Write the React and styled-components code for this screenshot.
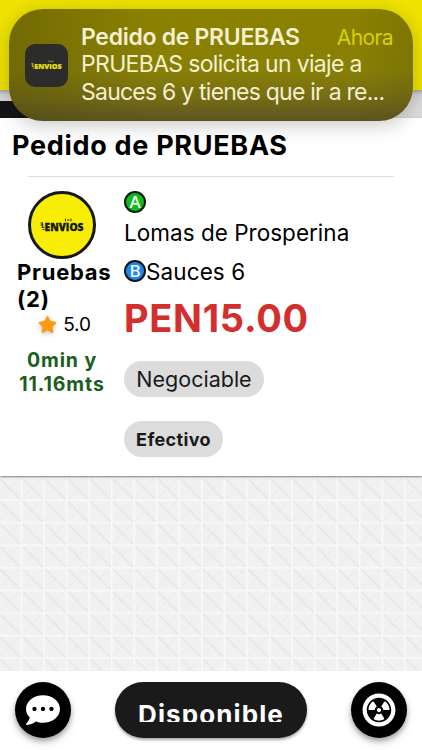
import React from "react";
import styled, { createGlobalStyle } from "styled-components";
import { FaCommentDots, FaRadiationAlt, FaStar } from "react-icons/fa";

const EnviosMark = ({ color, size }) => (
  <svg width={size} height={size * 0.32} viewBox="0 0 44 14">
    <g fill="none" stroke={color} strokeWidth="0.9">
      <path d="M0.5 5h2.5M0.5 7h3M1.5 9.3h3M2.5 11.5h2M2.5 4.5v5" />
      <path d="M25.5 0.6v2.6M31 0.6v2.6M27 2h2.6" />
    </g>
    <text
      x="4.5"
      y="13"
      fill={color}
      stroke={color}
      strokeWidth="0.3"
      fontFamily="Open Sans, sans-serif"
      fontSize="11"
      fontWeight="800"
      textLength="39"
      lengthAdjust="spacingAndGlyphs"
    >
      ENVIOS
    </text>
  </svg>
);

const App = () => {
  return (
    <>
      <GlobalStyle />
      <Screen>
        <Header />
        <Progress />
        <Order>
          <Title>Pedido de PRUEBAS</Title>
          <Divider />
          <Details>
            <Client>
              <Avatar>
                <EnviosMark color="#16160c" size={44} />
              </Avatar>
              <ClientName>Pruebas (2)</ClientName>
              <Rating>
                <FaStar />
                <span>5.0</span>
              </Rating>
              <Distance>
                0min y
                <br />
                11.16mts
              </Distance>
            </Client>
            <Trip>
              <Pin $color="#0fbc1c">A</Pin>
              <Origin>Lomas de Prosperina</Origin>
              <Destination>
                <Pin $color="#1f86f5">B</Pin>
                <span>Sauces 6</span>
              </Destination>
              <Price>PEN15.00</Price>
              <Chip $width={140}>Negociable</Chip>
              <Chip $width={99} $strong>
                Efectivo
              </Chip>
            </Trip>
          </Details>
        </Order>
        <Pattern>
          <svg width="100%" height="100%">
            <defs>
              <pattern
                id="tile"
                width="22.55"
                height="22.55"
                x="-1.8"
                y="1"
                patternUnits="userSpaceOnUse"
              >
                <path d="M0 22.55L22.55 0" stroke="#ececec" strokeWidth="1" />
                <path d="M0 0L22.55 22.55" stroke="#e5e5e5" strokeWidth="1.5" />
                <path d="M0 0.7H22.55M0.7 0V22.55" stroke="#fafafa" strokeWidth="1.4" />
              </pattern>
            </defs>
            <rect width="100%" height="100%" fill="url(#tile)" />
          </svg>
        </Pattern>
        <Footer>
          <RoundButton $icon={34}>
            <FaCommentDots />
          </RoundButton>
          <StatusButton>
            <StatusText>Disponible</StatusText>
          </StatusButton>
          <RoundButton $icon={34}>
            <FaRadiationAlt />
          </RoundButton>
        </Footer>
        <Notification>
          <AppIcon>
            <EnviosMark color="#e9df10" size={31} />
          </AppIcon>
          <Message>
            <MessageTop>
              <strong>Pedido de PRUEBAS</strong>
              <time>Ahora</time>
            </MessageTop>
            <MessageLine $spacing={-0.67}>PRUEBAS solicita un viaje a</MessageLine>
            <MessageLine $spacing={-0.77}>Sauces 6 y tienes que ir a re...</MessageLine>
          </Message>
        </Notification>
      </Screen>
    </>
  );
};

export default App;

const GlobalStyle = createGlobalStyle`
  * {
    box-sizing: border-box;
  }
  body {
    margin: 0;
    overflow: hidden;
    font-family: Inter, "Liberation Sans", sans-serif;
    background: #fff;
  }
`;

const Screen = styled.div`
  position: relative;
  display: flex;
  flex-direction: column;
  width: 422px;
  height: 750px;
  overflow: hidden;
`;

const Header = styled.header`
  flex: none;
  height: 90px;
  background: #eee300;
`;

const Progress = styled.div`
  flex: none;
  height: 28px;
  background: linear-gradient(#a9a9ac 0, #d5d5d8 5px, #dadadd 11px, transparent 11px),
    linear-gradient(90deg, #151516 50%, #dcdcdd 50%);
`;

const Order = styled.section`
  position: relative;
  flex: none;
  height: 358px;
  padding-top: 12px;
  background: #fff;
  box-shadow: 0 1px 2px rgb(0 0 0 / 50%);
`;

const Title = styled.h1`
  margin: 0 0 0 12px;
  font-size: 27px;
  line-height: 32px;
  font-weight: 700;
  letter-spacing: 0.7px;
  white-space: nowrap;
`;

const Divider = styled.div`
  height: 1px;
  margin: 14px 28px 0;
  background: #dedede;
`;

const Details = styled.div`
  display: flex;
  padding-top: 14px;
`;

const Client = styled.div`
  width: 124px;
  display: flex;
  flex-direction: column;
  align-items: center;
`;

const Avatar = styled.div`
  display: flex;
  align-items: center;
  justify-content: center;
  width: 68px;
  height: 68px;
  border: 3.5px solid #171717;
  border-radius: 50%;
  background: #f8ed05;
`;

const ClientName = styled.div`
  align-self: stretch;
  padding: 0 8px 0 17px;
  font-size: 22px;
  line-height: 27px;
  font-weight: 700;
  letter-spacing: 0.75px;
`;

const Rating = styled.div`
  display: flex;
  align-items: center;
  gap: 6px;
  height: 23px;
  padding-left: 5px;
  font-size: 19px;
  letter-spacing: -0.2px;
  svg {
    color: #ff990b;
    filter: drop-shadow(0 2px 2px rgb(0 0 0 / 20%));
  }
`;

const Distance = styled.div`
  margin-top: 12px;
  font-size: 19.5px;
  line-height: 24px;
  font-weight: 700;
  letter-spacing: 0.9px;
  text-align: center;
  color: #1b5e20;
`;

const Trip = styled.div`
  display: flex;
  flex-direction: column;
  align-items: flex-start;
`;

const Pin = styled.span`
  display: inline-flex;
  align-items: center;
  justify-content: center;
  width: 22px;
  height: 22px;
  border: 2px solid #0c1710;
  border-radius: 50%;
  font: 500 17px/18px "Noto Sans", sans-serif;
  color: #fff;
  background: ${(props) => props.$color};
`;

const Origin = styled.div`
  margin-top: 5px;
  font-size: 22.5px;
  line-height: 30px;
  letter-spacing: 0.02px;
`;

const Destination = styled.div`
  display: flex;
  align-items: center;
  height: 30px;
  margin-top: 8px;
  font-size: 22.5px;
  letter-spacing: 0.1px;
`;

const Price = styled.div`
  margin-top: 8px;
  font-size: 38px;
  line-height: 48px;
  font-weight: 700;
  letter-spacing: 0.7px;
  color: #d32f2f;
`;

const Chip = styled.div`
  display: flex;
  align-items: center;
  justify-content: center;
  width: ${(props) => props.$width}px;
  height: 36px;
  margin-top: ${(props) => (props.$strong ? 24 : 19)}px;
  border-radius: 18px;
  font-size: ${(props) => (props.$strong ? 18 : 21.5)}px;
  font-weight: ${(props) => (props.$strong ? 700 : 400)};
  letter-spacing: ${(props) => (props.$strong ? 0.35 : 0)}px;
  color: #1a1a1a;
  background: #dcdcdc;
`;

const Pattern = styled.div`
  flex: 1;
  background: #f1f1f1;
  svg {
    display: block;
  }
`;

const Footer = styled.footer`
  display: flex;
  justify-content: space-between;
  flex: none;
  height: 79px;
  padding: 11px 15px 0;
  background: #fff;
`;

const RoundButton = styled.button`
  display: flex;
  align-items: center;
  justify-content: center;
  width: 56px;
  height: 56px;
  padding: 0;
  border: none;
  border-radius: 50%;
  font-size: ${(props) => props.$icon}px;
  color: #fff;
  background: #000;
  box-shadow: 0 3px 5px rgb(0 0 0 / 30%), 0 5px 10px rgb(0 0 0 / 12%);
`;

const StatusButton = styled.button`
  display: flex;
  justify-content: center;
  width: 192px;
  height: 56px;
  padding: 17px 0 0;
  border: none;
  border-radius: 28px;
  background: #1a1a1a;
  box-shadow: 0 2px 3px rgb(0 0 0 / 35%);
`;

const StatusText = styled.span`
  height: 23px;
  overflow: hidden;
  font: 700 26px/32px Inter, sans-serif;
  letter-spacing: 1.1px;
  color: #fff;
`;

const Notification = styled.aside`
  position: absolute;
  left: 9px;
  top: 9px;
  display: flex;
  align-items: center;
  width: 404px;
  height: 112px;
  padding: 0 20px 0 16px;
  border-radius: 34px;
  color: #f3efcf;
  background: linear-gradient(
      90deg,
      rgb(70 65 10 / 35%) 0,
      transparent 35%,
      transparent 85%,
      rgb(70 65 10 / 18%) 100%
    ),
    linear-gradient(#8b8100 0, #888006 55%, #756c15 80%, #5b5522 100%);
  box-shadow: 0 4px 20px rgb(0 0 0 / 22%);
`;

const AppIcon = styled.div`
  display: flex;
  align-items: center;
  justify-content: center;
  flex: none;
  width: 43px;
  height: 43px;
  border-radius: 10px;
  background: #2c2c2b;
`;

const Message = styled.div`
  flex: 1;
  min-width: 0;
  margin-left: 13px;
`;

const MessageTop = styled.div`
  display: flex;
  justify-content: space-between;
  line-height: 27px;
  white-space: nowrap;
  strong {
    font-size: 23px;
    font-weight: 600;
    letter-spacing: -0.3px;
  }
  time {
    font-size: 21px;
    letter-spacing: -0.6px;
    color: #d9d000;
  }
`;

const MessageLine = styled.div`
  font-size: 23px;
  line-height: 27.5px;
  letter-spacing: ${(props) => props.$spacing}px;
  white-space: nowrap;
`;
